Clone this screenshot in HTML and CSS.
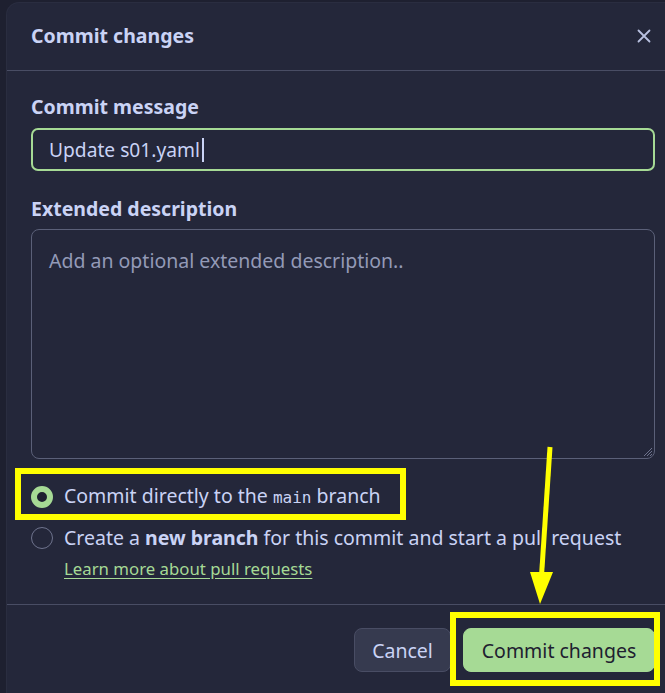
FILE: index.html
```html
<!DOCTYPE html>
<html>
<head>
<meta charset="utf-8">
<link rel="stylesheet" href="styles.css">
</head>
<body>
<div class="dialog">
  <div class="header">
    <div class="title">Commit changes</div>
    <svg class="close" width="16" height="16" viewBox="0 0 16 16"><path d="M2.5 2.5L13.5 13.5M13.5 2.5L2.5 13.5" stroke="#b8c0e0" stroke-width="1.8" stroke-linecap="round"/></svg>
  </div>
  <div class="body">
    <div class="label">Commit message</div>
    <div class="input"><span class="value">Update s01.yaml</span><span class="caret"></span></div>
    <div class="label label-ext">Extended description</div>
    <div class="textarea">
      <span class="placeholder">Add an optional extended description..</span>
      <svg class="grip" width="12" height="12" viewBox="0 0 12 12"><path d="M11 3L3 11M11 6L6 11M11 9L9 11" stroke="#6e738d" stroke-width="1"/></svg>
    </div>
    <div class="options">
      <div class="option">
        <span class="radio checked"></span>
        <span class="opt-text">Commit directly to the <code>main</code> branch</span>
      </div>
      <div class="option">
        <span class="radio"></span>
        <span class="opt-text">Create a <b>new branch</b> for this commit and start a pull request</span>
      </div>
      <a class="learn">Learn more about pull requests</a>
    </div>
  </div>
  <div class="footer">
    <button class="btn cancel">Cancel</button>
    <button class="btn primary">Commit changes</button>
  </div>
</div>
<div class="hl hl-1"></div>
<div class="hl hl-2"></div>
<svg class="arrow" width="665" height="693" viewBox="0 0 665 693">
  <path d="M550 447L541.5 576" stroke="#ffff00" stroke-width="5"/>
  <path d="M530 572L553 572L540 604Z" fill="#ffff00"/>
</svg>
</body>
</html>
```
FILE: styles.css
```css
html, body {
  margin: 0;
  padding: 0;
}
body {
  width: 665px;
  height: 693px;
  overflow: hidden;
  background: #1e2030;
  font-family: "Noto Sans", "Open Sans", sans-serif;
  color: #cad3f5;
  position: relative;
}
.dialog {
  margin: 3px 0 0 7px;
  width: 672px;
  height: 720px;
  background: #24273a;
  border-radius: 12px;
  box-shadow: 0 0 0 1px #2a2d40;
}
.header {
  padding: 0 14px 0 24px;
  display: flex;
  align-items: center;
  justify-content: space-between;
  border-bottom: 1px solid #494d64;
  box-sizing: border-box;
  height: 68px;
}
.title {
  font-size: 19.5px;
  font-weight: 700;
  line-height: 26px;
  margin-top: -2px;
}
.close {
  display: block;
  margin-right: 13px;
  margin-top: -2px;
}
.body {
  padding: 23px 24px 0 24px;
}
.label {
  font-size: 19.5px;
  font-weight: 700;
  line-height: 26px;
}
.input {
  margin-top: 8px;
  height: 43px;
  box-sizing: border-box;
  border: 2px solid #a6da95;
  border-radius: 7px;
  padding: 0 16px;
  display: flex;
  align-items: center;
  font-size: 19.2px;
  line-height: 26px;
}
.caret {
  display: inline-block;
  width: 2px;
  height: 24px;
  background: #cad3f5;
  margin-left: 2px;
}
.label-ext {
  margin-top: 25px;
}
.textarea {
  position: relative;
  margin-top: 7px;
  height: 230px;
  box-sizing: border-box;
  border: 1px solid #5b6078;
  border-radius: 8px;
  padding: 18px 17px;
  font-size: 19.5px;
  line-height: 26px;
}
.placeholder {
  color: #939ab7;
}
.grip {
  position: absolute;
  right: 1px;
  bottom: 1px;
}
.options {
  margin-top: 25px;
  display: flex;
  flex-direction: column;
}
.option {
  display: flex;
  align-items: center;
  gap: 11px;
  font-size: 19.5px;
  line-height: 26px;
  height: 26px;
}
.option + .option {
  margin-top: 15px;
}
.radio {
  width: 22px;
  height: 22px;
  box-sizing: border-box;
  border-radius: 50%;
  border: 1px solid #6e738d;
  flex: none;
}
.radio.checked {
  border: 6px solid #a6da95;
  background: #1e2030;
}
.opt-text b {
  font-weight: 700;
}
code {
  font-family: "DejaVu Sans Mono", monospace;
  font-size: 16px;
}
.learn {
  margin-top: 6px;
  margin-left: 33px;
  font-size: 16.8px;
  line-height: 24px;
  color: #a6da95;
  text-decoration: underline;
  text-underline-offset: 3px;
  align-self: flex-start;
}
.footer {
  margin-top: 23px;
  border-top: 1px solid #494d64;
  padding: 23px 24px 0 24px;
  display: flex;
  justify-content: flex-end;
  gap: 12px;
}
.btn {
  height: 44px;
  border-radius: 8px;
  font-family: "Noto Sans", "Open Sans", sans-serif;
  font-size: 19.5px;
  padding: 0 12px;
  box-sizing: border-box;
}
.cancel {
  background: #363a4f;
  border: 1px solid #494d64;
  color: #cad3f5;
  width: 97px;
}
.primary {
  background: #a6da95;
  border: 1px solid #a6da95;
  color: #1e2030;
  width: 192px;
}
.hl {
  position: absolute;
  border: 6px solid #ffff00;
  box-sizing: border-box;
}
.hl-1 {
  left: 15px;
  top: 468px;
  width: 391px;
  height: 52px;
}
.hl-2 {
  left: 450px;
  top: 612px;
  width: 210px;
  height: 74px;
}
.arrow {
  position: absolute;
  left: 0;
  top: 0;
}
```
